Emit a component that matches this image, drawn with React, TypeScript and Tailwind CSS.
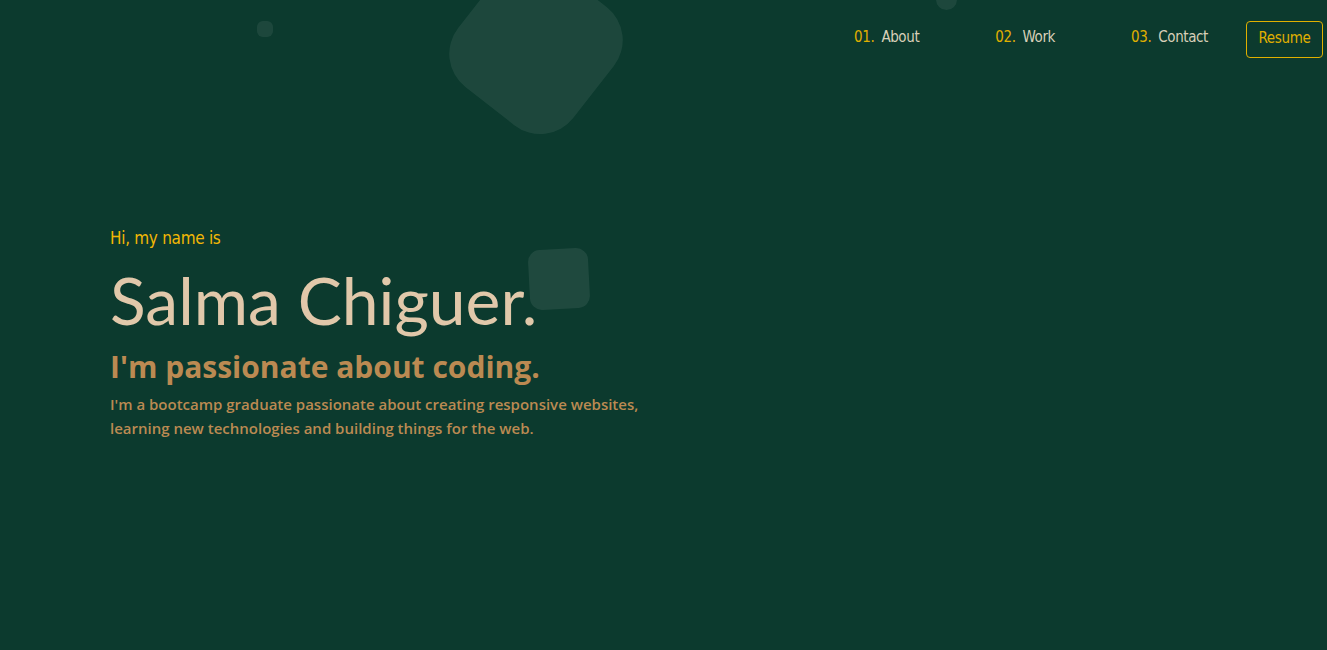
import React from "react";

const navFont = { fontFamily: '"DejaVu Sans Condensed", "DejaVu Sans", sans-serif' };

export default function App() {
  const items = [
    ["01.", "About"],
    ["02.", "Work"],
    ["03.", "Contact"],
  ];
  return (
    <div className="relative w-full h-[650px] overflow-hidden bg-[#0c3a2e]" style={{ fontFamily: '"Open Sans", sans-serif' }}>
      {/* decorative shapes */}
      <div className="absolute left-[463px] top-[-28px] w-[146px] h-[150px] rounded-[42px] bg-[#ffffff12] rotate-[38deg]" />
      <div className="absolute left-[529px] top-[249px] w-[60px] h-[60px] rounded-[12px] bg-[#ffffff14] rotate-[-3deg]" />
      <div className="absolute left-[257px] top-[21px] w-[16px] h-[16px] rounded-[6px] bg-[#ffffff12]" />
      <div className="absolute left-[936px] top-[-11px] w-[21px] h-[21px] rounded-full bg-[#ffffff12]" />

      <nav className="relative flex justify-end items-center pt-[21px] pr-[4px]" style={navFont}>
        <ul className="flex items-center gap-[76px] mr-[38px] mb-[4px] text-[15px] tracking-[-0.4px]">
          {items.map(([n, l]) => (
            <li key={l} className="flex gap-[7px]">
              <span className="text-[#e0b000]">{n}</span>
              <span className="text-[#d9cfb8]">{l}</span>
            </li>
          ))}
        </ul>
        <button className="w-[77px] h-[37px] border border-[#e0b000] rounded-[4px] text-[15px] tracking-[-0.3px] text-[#e0b000] pb-[3px]" style={navFont}>Resume</button>
      </nav>

      <section className="relative pl-[110px] pt-[168px]">
        <p className="text-[17px] tracking-[-0.3px] text-[#f2b705]" style={navFont}>Hi, my name is</p>
        <h1 className="text-[66px] leading-[80px] mt-[8px] text-[#e1c8aa]" style={{ fontFamily: 'Lato, sans-serif' }}>Salma Chiguer.</h1>
        <h2 className="text-[30px] font-bold leading-[40px] mt-[7px] text-[#bb8a52]">I'm passionate about coding.</h2>
        <p className="text-[15px] leading-[24px] mt-[5px] text-[#bb8a52] font-semibold max-w-[560px]">
          I'm a bootcamp graduate passionate about creating responsive websites,
          <br />
          learning new technologies and building things for the web.
        </p>
      </section>
    </div>
  );
}
